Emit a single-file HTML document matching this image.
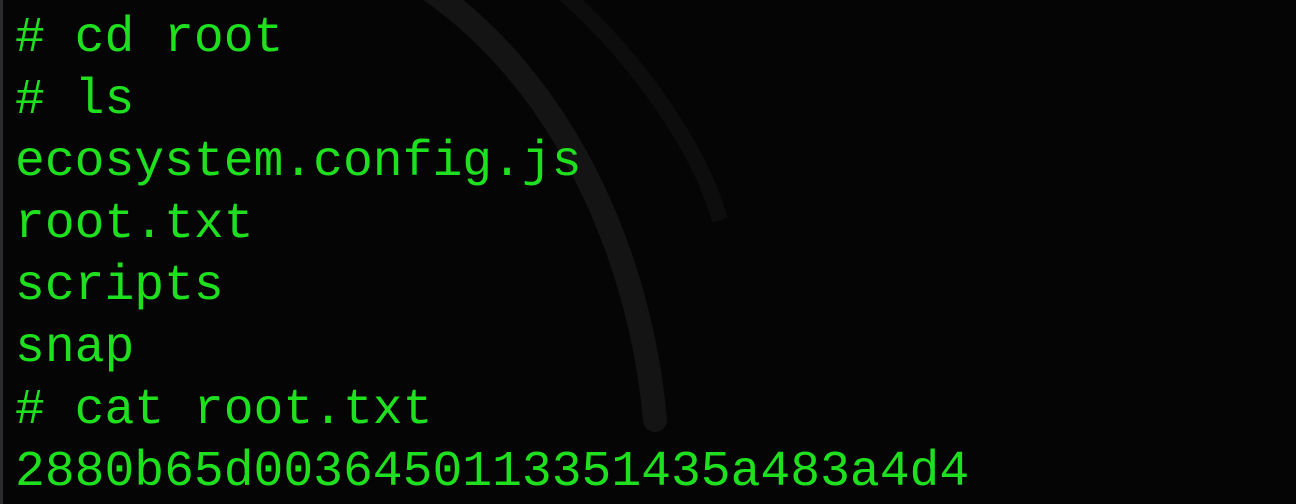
<!DOCTYPE html>
<html><head><meta charset="utf-8"><style>
html,body{margin:0;padding:0;width:1296px;height:504px;overflow:hidden;background:#050505;}
.bar{position:absolute;left:0;top:0;width:3px;height:504px;background:#2a2b30;}
svg{position:absolute;left:0;top:0;}
pre{position:absolute;left:15px;top:7px;margin:0;font-family:"Liberation Mono",monospace;font-size:49.7px;line-height:62px;color:#1fe01f;}
</style></head><body>
<svg width="1296" height="504">
<path d="M430 -10 C560 80 640 250 655 420" stroke="#141414" stroke-width="24" fill="none" stroke-linecap="round"/>
<path d="M560 -10 C640 60 700 150 720 220" stroke="#0d0d0d" stroke-width="16" fill="none"/>
</svg>
<div class="bar"></div>
<pre># cd root
# ls
ecosystem.config.js
root.txt
scripts
snap
# cat root.txt
2880b65d0036450113351435a483a4d4</pre>
</body></html>
